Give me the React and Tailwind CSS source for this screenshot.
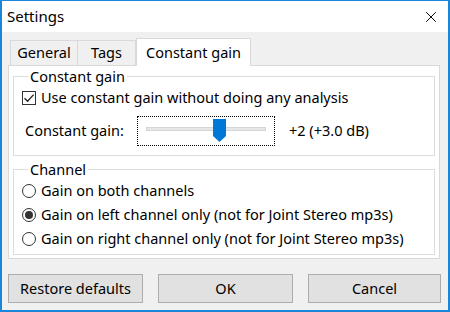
import { X } from 'lucide-react';

function GroupBox({ label, className, children }) {
    return (
        <fieldset className={"border border-[#dcdcdc] px-[7px] " + className}>
            <legend className="ml-[7px] px-[2px] leading-[18px]">{label}</legend>
            {children}
        </fieldset>
    );
}

function Radio({ checked, label }) {
    return (
        <div className="flex items-center h-[24px]">
            <span className="w-[14px] h-[14px] rounded-full border border-[#333] bg-white flex items-center justify-center mr-[5px]">
                {checked && <span className="w-[8px] h-[8px] rounded-full bg-[#333]" />}
            </span>
            <span>{label}</span>
        </div>
    );
}

function Button({ children, className }) {
    return (
        <button className={"h-[29px] bg-[#e1e1e1] border border-[#adadad] text-black " + className}>
            {children}
        </button>
    );
}

export default function App() {
    const tabBase = "h-[25px] px-[6px] border border-[#d9d9d9] border-b-0 bg-[#f0f0f0] flex items-center";

    return (
        <div
            className="w-[450px] h-[312px] flex flex-col border-[2px] border-t border-[#1a86d9] bg-[#f0f0f0] text-[14.5px] text-black overflow-hidden"
            style={{ fontFamily: '"Noto Sans", "Open Sans", sans-serif' }}
        >
            <div className="h-[31px] bg-white flex items-center justify-between pl-[5px] pr-[8px] shrink-0">
                <span className="text-[15px]">Settings</span>
                <X size={18} strokeWidth={1.3} />
            </div>

            <div className="flex-1 flex flex-col px-[6px] pt-[6px]">
                <div className="flex items-end pl-[2px]">
                    <div className={tabBase + " w-[68px] justify-center"}>General</div>
                    <div className={tabBase + " w-[58px] border-l-0 justify-center"}>Tags</div>
                    <div className="relative z-10 -mb-px h-[28px] w-[115px] border border-[#d9d9d9] border-b-0 bg-white flex items-center justify-center">
                        Constant gain
                    </div>
                </div>

                <div className="h-[194px] w-[432px] border border-[#d9d9d9] bg-white px-[4px] pt-[1px]">
                    <GroupBox label="Constant gain" className="h-[89px]">
                        <div className="flex items-center h-[22px] pl-[1px] mt-[2px]">
                            <span className="w-[14px] h-[14px] border border-[#333] bg-white flex items-center justify-center mr-[5px]">
                                <svg width="12" height="12" viewBox="0 0 12 12">
                                    <path d="M1.5 6.2 L4.6 9.3 L10.6 2.6" fill="none" stroke="#222" strokeWidth="1.3" />
                                </svg>
                            </span>
                            <span>Use constant gain without doing any analysis</span>
                        </div>
                        <div className="flex items-center mt-[7px] h-[30px]">
                            <span className="pl-[4px] w-[116px]">Constant gain:</span>
                            <div className="relative w-[138px] h-[30px] border border-dotted border-black">
                                <div className="absolute left-[8px] right-[8px] top-[10px] h-[4px] bg-[#e7e7e7] border border-[#d6d6d6]" />
                                <svg className="absolute left-[75px] top-[2px]" width="13" height="23" viewBox="0 0 13 23">
                                    <path d="M0 0 H13 V17 L6.5 23 L0 17 Z" fill="#0078d7" />
                                </svg>
                            </div>
                            <span className="ml-[14px]">+2 (+3.0 dB)</span>
                        </div>
                    </GroupBox>

                    <GroupBox label="Channel" className="h-[95px] mt-[4px]">
                        <div className="pl-[1px] mt-[1px]">
                            <Radio label="Gain on both channels" />
                            <Radio checked label="Gain on left channel only (not for Joint Stereo mp3s)" />
                            <Radio label="Gain on right channel only (not for Joint Stereo mp3s)" />
                        </div>
                    </GroupBox>
                </div>

                <div className="flex mt-[15px] gap-[15px]">
                    <Button className="w-[135px]">Restore defaults</Button>
                    <Button className="w-[135px]">OK</Button>
                    <Button className="w-[133px]">Cancel</Button>
                </div>
            </div>
        </div>
    );
}
